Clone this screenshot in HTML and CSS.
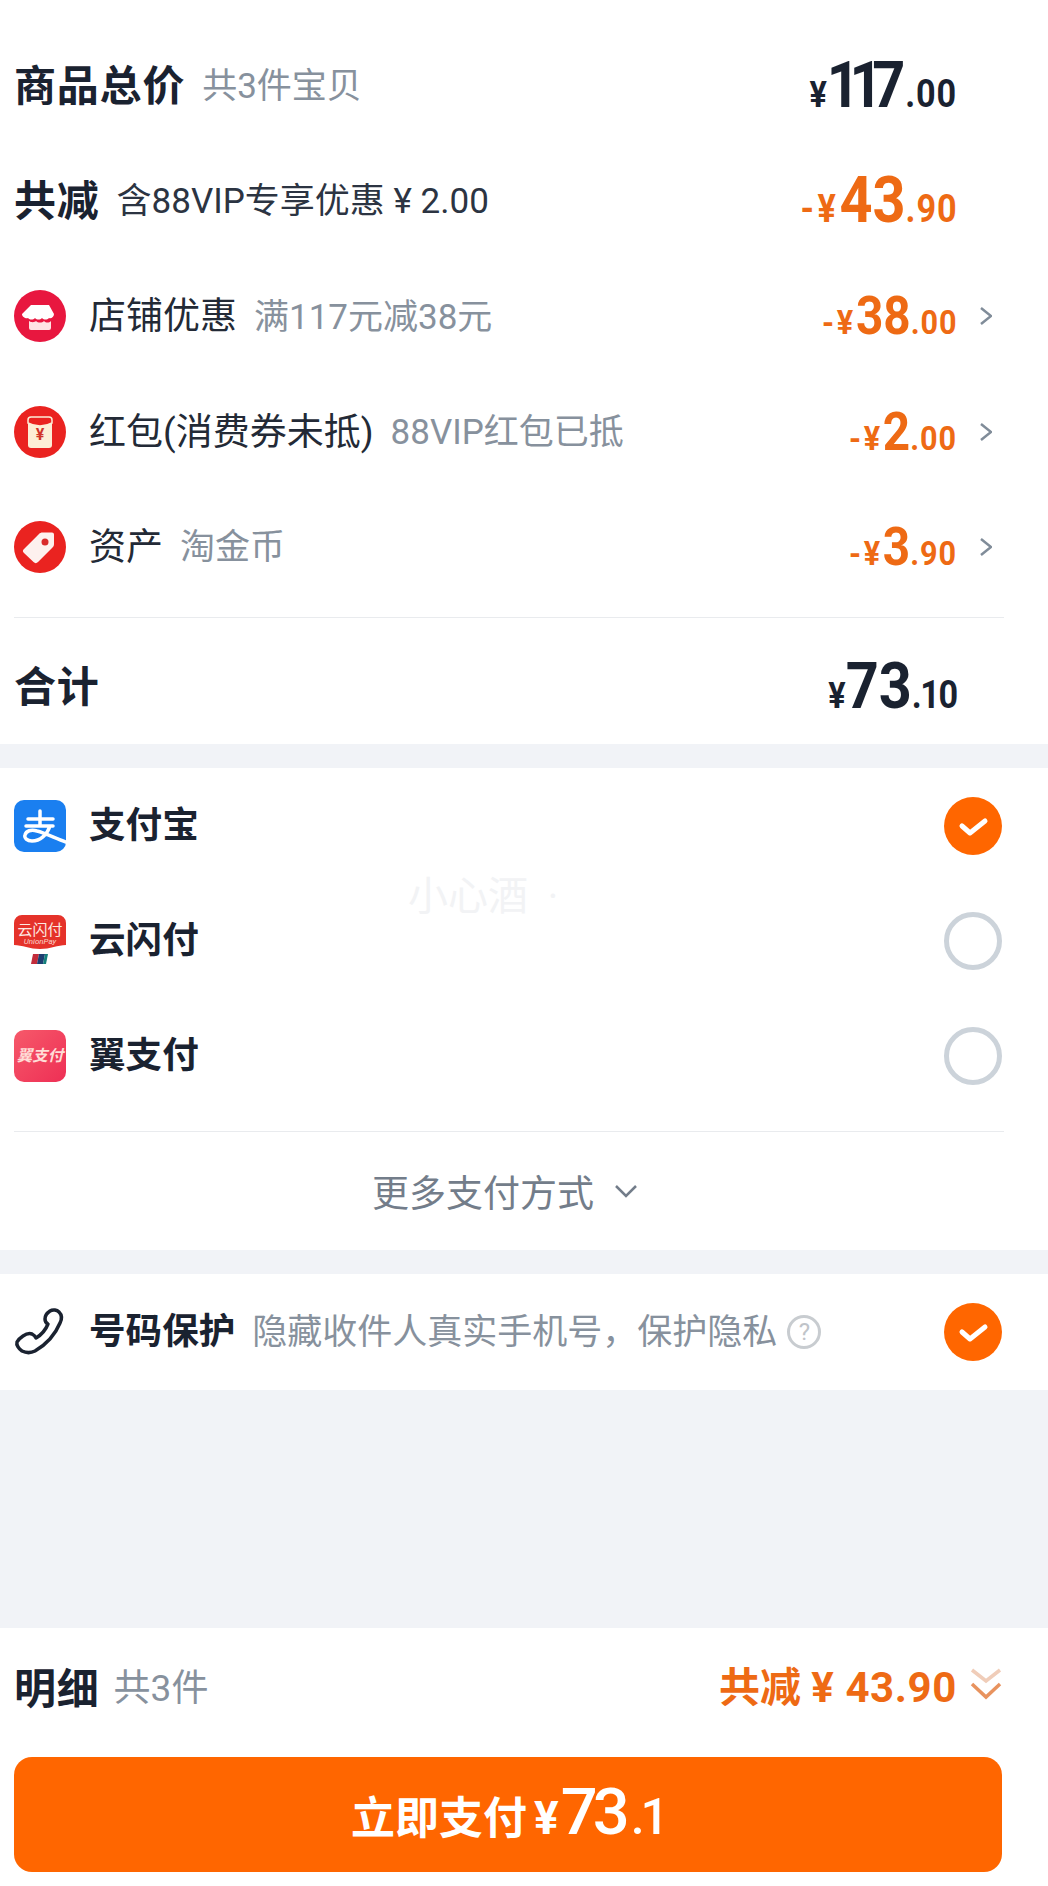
FILE: index.html
```html
<!DOCTYPE html>
<html lang="zh-CN">
<head>
    <meta charset="UTF-8">
    <meta name="viewport" content="width=device-width, initial-scale=1.0">
    <title>确认付款</title>
    <link rel="stylesheet" href="styles.css">
</head>
<body>

    <div class="page">
        <!-- 价格明细 -->
        <section class="card price-card">
            <div class="row">
                <div class="row-left">
                    <span class="title">商品总价</span>
                    <span class="sub">共3件宝贝</span>
                </div>
                <div class="amt amt-lg"><span class="cur">¥</span><span class="int tight">117</span><span class="dec">.00</span></div>
            </div>
            <div class="row">
                <div class="row-left">
                    <span class="title">共减</span>
                    <span class="sub sub-dark">含88VIP专享优惠 ¥ 2.00</span>
                </div>
                <div class="amt amt-lg orange"><span class="cur">-¥</span><span class="int">43</span><span class="dec">.90</span></div>
            </div>
            <div class="row row-link">
                <div class="row-left">
                    <svg class="icon" viewBox="0 0 52 52">
                        <circle cx="26" cy="26" r="26" fill="#e8173f"/>
                        <path d="M17 15h18l5 9c0 3-3 5-5 4-2 2-5 2-7 0-2 2-5 2-7 0-2 2-5 2-7 0-2 1-6-1-6-4z" fill="#fff"/>
                        <path d="M15 31c3 2 6 1 7 0 2 2 6 2 8 0 2 2 5 2 7 0v7a2 2 0 0 1-2 2H17a2 2 0 0 1-2-2z" fill="#ffe3e3"/>
                    </svg>
                    <span class="name">店铺优惠</span>
                    <span class="sub">满117元减38元</span>
                </div>
                <div class="amt amt-md orange"><span class="cur">-¥</span><span class="int">38</span><span class="dec">.00</span></div>
                <svg class="chev" viewBox="0 0 12 18"><path d="M1 1l10 8-10 8"/></svg>
            </div>
            <div class="row row-link">
                <div class="row-left">
                    <svg class="icon" viewBox="0 0 52 52">
                        <circle cx="26" cy="26" r="26" fill="#ea2320"/>
                        <path d="M14 14a3 3 0 0 1 3-3h18a3 3 0 0 1 3 3v25a3 3 0 0 1-3 3H17a3 3 0 0 1-3-3z" fill="#fdeed6"/>
                        <path d="M14 14a3 3 0 0 1 3-3h18a3 3 0 0 1 3 3v3c-7 4-17 4-24 0z" fill="#ea2320" stroke="#fdeed6" stroke-width="1.5"/>
                        <text class="icon-yen" x="26" y="34" text-anchor="middle">¥</text>
                    </svg>
                    <span class="name">红包(消费券未抵)</span>
                    <span class="sub">88VIP红包已抵</span>
                </div>
                <div class="amt amt-md orange"><span class="cur">-¥</span><span class="int tight-sm">2</span><span class="dec">.00</span></div>
                <svg class="chev" viewBox="0 0 12 18"><path d="M1 1l10 8-10 8"/></svg>
            </div>
            <div class="row row-link">
                <div class="row-left">
                    <svg class="icon" viewBox="0 0 52 52">
                        <circle cx="26" cy="26" r="26" fill="#ea2320"/>
                        <path d="M10 28 25 13c1-1 2-1.500 3.500-1.500H38a2 2 0 0 1 2 2V23c0 1.500-.5 2.500-1.500 3.500L24 41c-1.500 1.500-3 1.500-4.500 0L10 32c-1.500-1.500-1.500-2.500 0-4z" fill="#fdf1ee"/>
                        <circle cx="31" cy="21" r="3.500" fill="#d92b2b"/>
                    </svg>
                    <span class="name">资产</span>
                    <span class="sub">淘金币</span>
                </div>
                <div class="amt amt-md orange"><span class="cur">-¥</span><span class="int">3</span><span class="dec">.90</span></div>
                <svg class="chev" viewBox="0 0 12 18"><path d="M1 1l10 8-10 8"/></svg>
            </div>
            <div class="line"></div>
            <div class="row row-total">
                <div class="row-left">
                    <span class="title">合计</span>
                </div>
                <div class="amt amt-lg"><span class="cur">¥</span><span class="int">73</span><span class="dec dec-tight">.10</span></div>
            </div>
        </section>

        <!-- 支付方式 -->
        <section class="card pay-card">
            <div class="row pay-row">
                <div class="row-left">
                    <svg class="icon" viewBox="0 0 52 52">
                        <rect width="52" height="52" rx="10" fill="#1a7ff0"/>
                        <path class="ali" d="M14 19h25M26 11v14M12 26h27M36 26c-3 9-10 15-18 15-5 0-8-3-7-6 1-4 6-6 12-4 8 2 18 7 29 11"/>
                    </svg>
                    <span class="name bold">支付宝</span>
                </div>
                <span class="radio on"><svg viewBox="0 0 58 58"><path d="M18 29l8 7 15-12"/></svg></span>
            </div>
            <div class="row pay-row">
                <div class="row-left">
                    <svg class="icon" viewBox="0 0 52 52">
                        <path d="M8 0h36a8 8 0 0 1 8 8v22c-8 0-16 4-26 4S8 30 0 30V8a8 8 0 0 1 8-8z" fill="#e5322a"/>
                        <path d="M19 39h6l-2 10h-6z" fill="#c22c3b"/>
                        <path d="M25 39h6l-2 10h-6z" fill="#1d3f72"/>
                        <path d="M31 39h3l-2 10h-3z" fill="#14807c"/>
                        <text class="up-cn" x="26" y="20" text-anchor="middle">云闪付</text>
                        <text class="up-en" x="26" y="29" text-anchor="middle">UnionPay</text>
                    </svg>
                    <span class="name bold">云闪付</span>
                </div>
                <span class="radio"></span>
            </div>
            <div class="row pay-row">
                <div class="row-left">
                    <span class="yi-logo">翼支付</span>
                    <span class="name bold">翼支付</span>
                </div>
                <span class="radio"></span>
            </div>
            <div class="line"></div>
            <div class="more">
                <span>更多支付方式</span>
                <svg class="more-chev" viewBox="0 0 24 14"><path d="M2 2l10 10L22 2"/></svg>
            </div>
            <!-- 水印 -->
            <span class="mark">小心酒  ·</span>
        </section>

        <!-- 号码保护 -->
        <section class="card phone-card">
            <div class="row pay-row">
                <div class="row-left">
                    <svg class="icon" viewBox="0 0 52 52">
                        <path class="phone" d="M36 5c3-2 7-1 9 1 3 3 3 7 1 11-5 12-13 21-25 28-4 2-9 2-13 0-3-2-6-6-5-9 1-2 3-4 6-6 3-2 6-3 9-2 2 1 3 2 4 4 5-3 10-9 12-14-2-1-3-3-3-5 0-3 2-6 5-8z"/>
                    </svg>
                    <span class="name bold">号码保护</span>
                    <span class="sub">隐藏收件人真实手机号，保护隐私</span>
                    <span class="help">?</span>
                </div>
                <span class="radio on"><svg viewBox="0 0 58 58"><path d="M18 29l8 7 15-12"/></svg></span>
            </div>
        </section>

        <div class="spacer"></div>

        <!-- 底部 -->
        <section class="card footer">
            <div class="row footer-row">
                <div class="row-left">
                    <span class="title">明细</span>
                    <span class="sub">共3件</span>
                </div>
                <div class="save">共减 <span class="save-num">¥ 43.90</span></div>
                <svg class="chev-double" viewBox="0 0 32 32">
                    <path class="fade" d="M2 2l14 11L30 2"/>
                    <path d="M2 16l14 13 14-13"/>
                </svg>
            </div>
            <button class="btn-pay">立即支付<span class="btn-cur">¥</span><span class="btn-int">73</span><span class="btn-dec">.1</span></button>
        </section>
    </div>

</body>
</html>
```

FILE: styles.css
```css
* {
    box-sizing: border-box;
}
body {
    margin: 0;
    background-color: #f1f3f7;
    font-family: Roboto, "Noto Sans CJK SC", sans-serif;
    color: #1a2230;
}
.page {
    width: 1048px;
    height: 1886px;
    display: flex;
    flex-direction: column;
}
.card {
    background-color: #fff;
    padding: 0 46px 0 14px;
    position: relative;
}
.price-card {
    height: 744px;
    padding-top: 28px;
}
.pay-card {
    height: 482px;
    margin-top: 24px;
}
.phone-card {
    height: 116px;
    margin-top: 24px;
}
.spacer {
    flex: 1;
}
.footer {
    height: 258px;
}

.row {
    height: 115.3px;
    display: flex;
    align-items: center;
    justify-content: space-between;
}
.row-left {
    display: flex;
    align-items: center;
    min-width: 0;
}
/* 中文字体偏下，留点底部空间 */
.title,
.name,
.sub {
    padding-bottom: 6px;
}
.title {
    font-size: 42px;
    font-weight: 700;
    letter-spacing: 0.8px;
}
.name {
    font-size: 37px;
    margin-left: 23px;
    color: #232a36;
}
.name.bold {
    font-size: 36.6px;
    font-weight: 700;
    color: #1a2230;
}
.sub {
    font-size: 35px;
    color: #87919d;
    margin-left: 17px;
    white-space: nowrap;
}
.sub-dark {
    color: #2c3442;
}
.icon {
    width: 52px;
    height: 52px;
    flex: none;
}
.icon-yen {
    font-size: 16px;
    font-weight: 700;
    fill: #d1352c;
}
.up-cn {
    font-size: 15px;
    fill: #fde9e2;
}
.up-en {
    font-size: 8px;
    font-style: italic;
    fill: #fbd2c9;
}
.ali {
    fill: none;
    stroke: #fff;
    stroke-width: 3.5;
    stroke-linecap: round;
}
.phone {
    fill: none;
    stroke: #1a2230;
    stroke-width: 3.5;
    stroke-linejoin: round;
}
.yi-logo {
    width: 52px;
    height: 52px;
    flex: none;
    border-radius: 10px;
    background: linear-gradient(135deg, #f6596a, #ee2f55);
    color: #ffdcd6;
    font-size: 15.5px;
    font-weight: 700;
    font-style: italic;
    line-height: 52px;
    text-align: center;
    white-space: nowrap;
    overflow: hidden;
}

/* 金额 */
.amt {
    margin-left: auto;
    white-space: nowrap;
    font-weight: 700;
    transform: scaleX(0.9);
    transform-origin: right center;
    margin-right: 45px;
    color: #1a2230;
}
.amt.orange {
    color: #ee6a14;
}
.row-link .amt {
    margin-right: 0;
}
.amt-lg .cur { font-size: 36px; }
.amt-lg .int { font-size: 64px; }
.amt-lg .dec { font-size: 38px; letter-spacing: 1px; }
.amt-md .cur { font-size: 34px; }
.amt-md .int { font-size: 53px; }
.amt-md .dec { font-size: 34px; letter-spacing: 1px; }
.orange.amt-lg .cur {
    font-size: 38px;
    letter-spacing: 4px;
}
.orange.amt-md .cur {
    letter-spacing: 3px;
}
.amt-lg .dec-tight {
    letter-spacing: -1.5px;
}
.tight {
    letter-spacing: -11.5px;
    margin-right: 11.5px;
}
.tight-sm {
    letter-spacing: -2px;
    margin-right: 2px;
}
.chev {
    width: 12px;
    height: 18px;
    flex: none;
    margin: 0 10px 0 23px;
}
.chev path {
    fill: none;
    stroke: #808c99;
    stroke-width: 2.5;
}

.line {
    height: 1px;
    background-color: #e9ebee;
    margin-right: -2px;
}
.price-card .line {
    margin-top: 13px;
}
.row-total {
    height: 126px;
    padding-top: 10px;
}

/* 支付方式 */
.pay-row {
    height: 115px;
}
.pay-card .line {
    margin-top: 18px;
}
.radio {
    width: 58px;
    height: 58px;
    flex: none;
    border-radius: 50%;
    border: 5px solid #ccd3da;
}
.radio.on {
    border: 0;
    background-color: #ff6600;
}
.radio svg {
    display: block;
    width: 58px;
    height: 58px;
}
.radio path {
    fill: none;
    stroke: #fff;
    stroke-width: 5;
    stroke-linecap: round;
    stroke-linejoin: round;
}
.more {
    height: 118px;
    display: flex;
    align-items: center;
    justify-content: center;
    gap: 20px;
    font-size: 37px;
    color: #737d8a;
    padding-right: 6px;
}
.more-chev {
    width: 24px;
    height: 14px;
}
.more-chev path {
    fill: none;
    stroke: #737d8a;
    stroke-width: 2.5;
}
.mark {
    position: absolute;
    left: 408px;
    top: 96px;
    font-size: 40px;
    color: #f2f3f5;
    white-space: pre;
}

.help {
    width: 34px;
    height: 34px;
    margin-left: 10px;
    flex: none;
    border-radius: 50%;
    border: 3px solid #c8ccd0;
    color: #c0c4c9;
    font-size: 24px;
    line-height: 28px;
    text-align: center;
}

/* 底部 */
.footer-row {
    height: 120px;
}
.footer .sub {
    margin-left: 14px;
    font-size: 37px;
}
.save {
    margin-left: auto;
    font-size: 41px;
    font-weight: 700;
    color: #ee6a14;
    padding-bottom: 8px;
}
.save-num {
    font-size: 42px;
    letter-spacing: 0.6px;
}
.chev-double {
    width: 32px;
    height: 32px;
    flex: none;
    margin: 0 0 8px 13px;
}
.chev-double path {
    fill: none;
    stroke: #e8935f;
    stroke-width: 3.5px;
}
.chev-double .fade {
    stroke: #f0cdb9;
}
.btn-pay {
    display: block;
    width: 988px;
    height: 115px;
    margin: 9px 0 0;
    padding: 0 0 6px;
    border: 0;
    border-radius: 18px;
    background-color: #ff6600;
    color: #fff;
    font-family: inherit;
    font-size: 44px;
    font-weight: 700;
    white-space: nowrap;
}
.btn-cur { font-size: 46px; margin-left: 7px; letter-spacing: 2px; }
.btn-int { font-size: 65px; font-weight: 500; letter-spacing: -5px; }
.btn-dec { font-size: 50px; font-weight: 500; letter-spacing: -4px; margin-left: 6px; }
```
